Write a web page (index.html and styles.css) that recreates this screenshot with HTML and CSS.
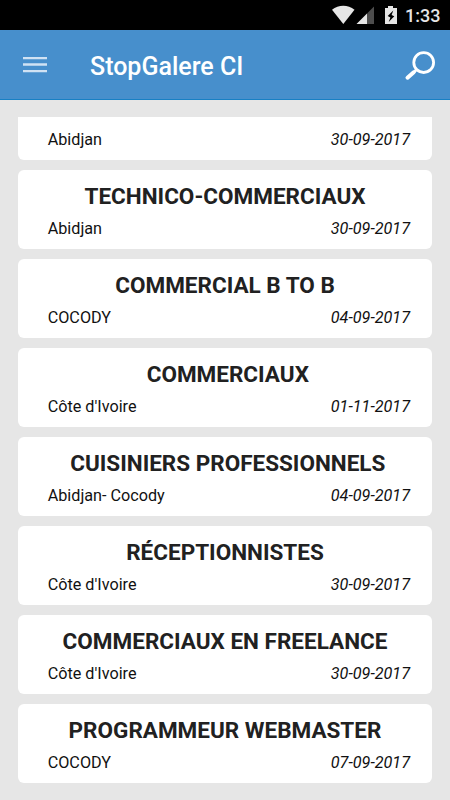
FILE: index.html
```html
<!DOCTYPE html>
<html lang="fr">
<head>
  <meta charset="utf-8">
  <meta name="viewport" content="width=device-width">
  <title>StopGalere CI</title>
  <link rel="stylesheet" href="styles.css">
</head>
<body>
  <div class="statusbar">
    <svg class="signals" width="66" height="30" viewBox="0 0 66 30">
      <path fill="#e6e6e6" d="M0 9.700C6.500 4.500 16 4.500 22.500 9.700L11.300 24z"/>
      <path fill="#4d4d4d" d="M42 6.500V24H35V13.500z"/>
      <path fill="#e6e6e6" d="M35 13.500V24H24.500z"/>
      <path fill="#e6e6e6" d="M56 6h5v2h4v16H53V8h3z"/>
      <path fill="#000" d="M61.300 10.500l-5.600 5.500 2.700 1.400-1.700 4.600 5.600-5.700-2.700-1.400z"/>
    </svg>
    <span class="clock">1:33</span>
  </div>
  <header class="toolbar">
    <svg class="menu" width="24" height="17" viewBox="0 0 24 17">
      <path fill="#d0e2f3" d="M0 .900h24v2.400H0zM0 7.300h24v2.500H0zM0 13.900h24v2.400H0z"/>
    </svg>
    <h1 class="title">StopGalere CI</h1>
    <svg class="search" width="32" height="32" viewBox="0 0 32 32">
      <g fill="none" stroke="#fff" stroke-linecap="round">
        <circle cx="19.700" cy="12.600" r="9.900" stroke-width="2.800"/>
        <path stroke-width="2.800" d="M12.400 19.800l-2 2"/>
        <path stroke-width="4" d="M9.700 22.300l-6.200 5.400"/>
      </g>
    </svg>
  </header>
  <main class="list">
    <div class="card card_cut">
      <div class="infos"><span>Abidjan</span><em>30-09-2017</em></div>
    </div>
    <div class="card">
      <h2>TECHNICO-COMMERCIAUX</h2>
      <div class="infos"><span>Abidjan</span><em>30-09-2017</em></div>
    </div>
    <div class="card">
      <h2>COMMERCIAL B TO B</h2>
      <div class="infos"><span>COCODY</span><em>04-09-2017</em></div>
    </div>
    <div class="card">
      <h2 class="spaced">COMMERCIAUX</h2>
      <div class="infos"><span>Côte d'Ivoire</span><em>01-11-2017</em></div>
    </div>
    <div class="card">
      <h2 class="spaced">CUISINIERS PROFESSIONNELS</h2>
      <div class="infos"><span>Abidjan- Cocody</span><em>04-09-2017</em></div>
    </div>
    <div class="card">
      <h2>RÉCEPTIONNISTES</h2>
      <div class="infos"><span>Côte d'Ivoire</span><em>30-09-2017</em></div>
    </div>
    <div class="card">
      <h2>COMMERCIAUX EN FREELANCE</h2>
      <div class="infos"><span>Côte d'Ivoire</span><em>30-09-2017</em></div>
    </div>
    <div class="card">
      <h2>PROGRAMMEUR WEBMASTER</h2>
      <div class="infos"><span>COCODY</span><em>07-09-2017</em></div>
    </div>
  </main>
</body>
</html>
```

FILE: styles.css
```css
body {
  margin: 0;
  height: 800px;
  overflow: hidden;
  background-color: #e6e6e6;
  font-family: Roboto, sans-serif;
  color: #212121;
}

.statusbar {
  display: flex;
  justify-content: flex-end;
  box-sizing: border-box;
  height: 30px;
  padding-right: 10px;
  background-color: #000000;
}
.signals {
  margin-right: 7px;
}
.clock {
  width: 35px;
  font-size: 18px;
  line-height: 32px;
  font-weight: 500;
  color: #e6e6e6;
  white-space: nowrap;
}

.toolbar {
  display: flex;
  align-items: center;
  box-sizing: border-box;
  height: 70px;
  padding: 0 14px 0 23px;
  background-color: #478fcc;
  border-bottom: 1px solid #1880c4;
}
.title {
  flex: 1;
  margin: 4px 0 0 43px;
  font-size: 25px;
  line-height: 31px;
  font-weight: 500;
  color: #ffffff;
}
.search {
  margin-top: 3px;
}

.list {
  display: flex;
  flex-direction: column;
  gap: 10px;
  padding: 17.400px 17.600px 0;
}
.card {
  box-sizing: border-box;
  height: 79.050px;
  padding: 11px 22.400px 0 30.100px;
  background-color: #ffffff;
  border-radius: 6px;
}
.card_cut {
  height: 42.400px;
  padding-top: 11.500px;
  border-radius: 0 0 6px 6px;
}
.card h2 {
  margin: 0 -4.800px 7px -12.500px;
  font-size: 22.500px;
  line-height: 30px;
  font-weight: 700;
  text-align: center;
  white-space: nowrap;
}
/* these two names have a leading space */
.card .spaced {
  padding-left: 5.600px;
}
.infos {
  display: flex;
  justify-content: space-between;
  font-size: 16.200px;
  line-height: 22px;
  color: #111111;
}
```
